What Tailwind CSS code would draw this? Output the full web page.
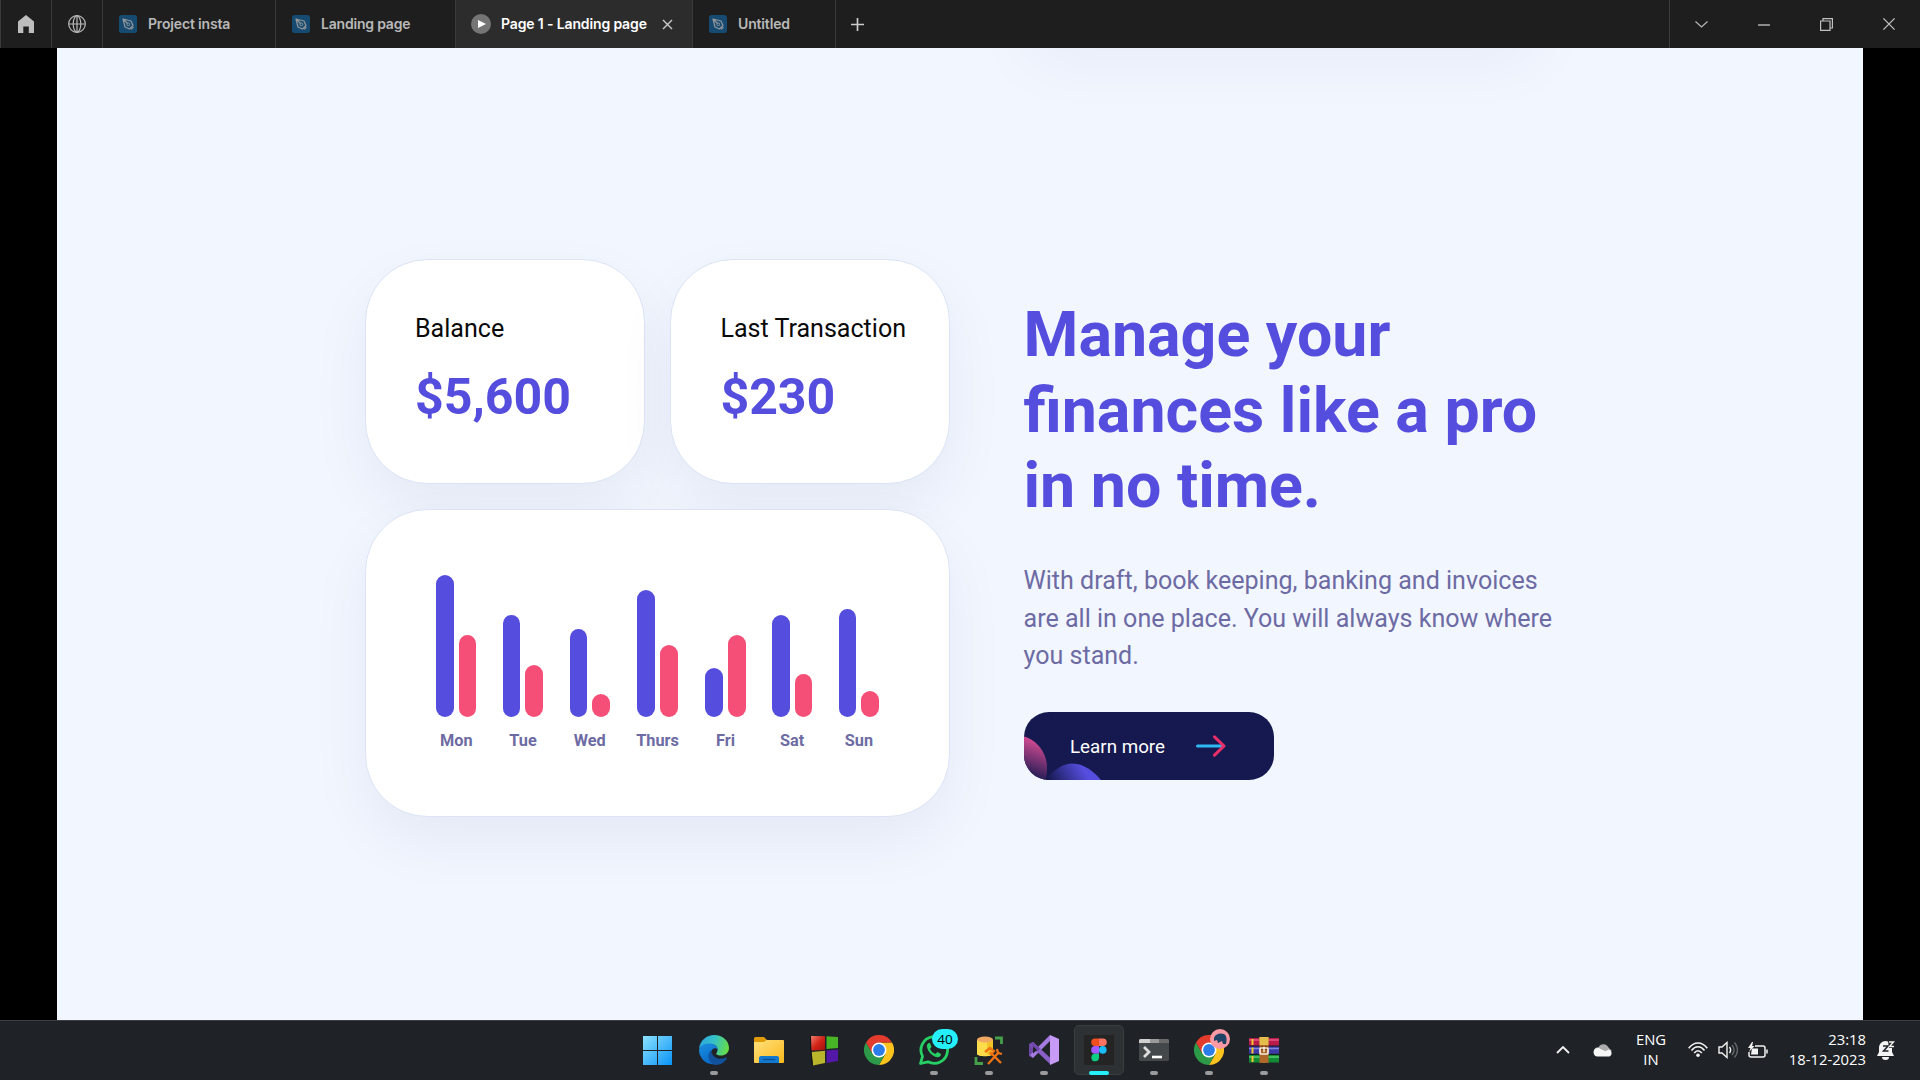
<!DOCTYPE html>
<html lang="en">
<head>
<meta charset="utf-8">
<title>Page 1 - Landing page</title>
<script src="https://cdn.jsdelivr.net/npm/@tailwindcss/browser@4"></script>
</head>
<body class="w-[1920px] h-[1080px] overflow-hidden bg-black flex flex-col font-['Roboto',sans-serif]">
<svg class="hidden">
  <symbol id="pen" viewBox="0 0 18 18">
    <rect width="18" height="18" rx="2.5" fill="#174a70"/>
    <path d="M4 4l8 2 2 4.5-3.5 3.5L6 12z M4 4l4.5 4.5 M12.2 14.4l2.2-2.2" fill="none" stroke="#93979b" stroke-width="1.2" stroke-linejoin="round"/>
    <circle cx="9.3" cy="9.3" r="1.4" fill="none" stroke="#93979b"/>
  </symbol>
  <symbol id="chrome" viewBox="0 0 30 30">
    <path d="M28 7.5A15 15 0 0 1 15 30L21.5 18.8 15 7.5z" fill="#fcc31e"/>
    <path d="M2 7.5A15 15 0 0 0 15 30L21.5 18.8 8.5 18.8z" fill="#2c9a48"/>
    <path d="M15 7.5H28A15 15 0 0 0 2 7.5L8.5 18.8z" fill="#e33b2e"/>
    <circle cx="15" cy="15" r="7.5" fill="#fff"/><circle cx="15" cy="15" r="5.9" fill="#2b7de9"/>
  </symbol>
</svg>

<header class="h-12 shrink-0 flex bg-[#1e1e1e] text-[#b9b9b9] font-['Inter',sans-serif] text-[14px] font-semibold border-l border-[#3a3a3a]">
  <div class="w-[51px] flex items-center justify-center border-r border-[#3a3a3a]">
    <svg width="16" height="18" viewBox="0 0 16 18"><path d="M8 0l8 6.5V18h-5.2v-6.500H5.300V18H0V6.500z" fill="#bdbdbd"/></svg>
  </div>
  <div class="w-[51px] flex items-center justify-center border-r border-[#3a3a3a]">
    <svg width="18" height="18" viewBox="0 0 18 18" fill="none" stroke="#b9b9b9" stroke-width="1.2"><circle cx="9" cy="9" r="8.300"/><ellipse cx="9" cy="9" rx="3.800" ry="8.300"/><path d="M.7 9h16.600M9 .7v16.600"/></svg>
  </div>
  <div class="w-[173px] flex items-center gap-[11px] pl-4 border-r border-[#3a3a3a]"><svg width="18" height="18"><use href="#pen"/></svg><span class="tracking-[-0.17px] pb-px">Project insta</span></div>
  <div class="w-[180px] flex items-center gap-[11px] pl-4 border-r border-[#3a3a3a]"><svg width="18" height="18"><use href="#pen"/></svg><span class="tracking-[-0.2px] pb-px">Landing page</span></div>
  <div class="w-[237px] flex items-center pl-[15px] border-r border-[#3a3a3a] bg-[#2c2c2c] text-white">
    <svg width="20" height="20"><circle cx="10" cy="10" r="10" fill="#757575"/><path d="M7 6l8 4-8 4z" fill="#fff"/></svg>
    <span class="ml-2.5 w-[161px] whitespace-nowrap tracking-[-0.14px] pb-px">Page 1 - Landing page</span>
    <svg width="11" height="11" stroke="#ccc" stroke-width="1.4"><path d="M1 1l9 9M10 1l-9 9"/></svg>
  </div>
  <div class="w-[143px] flex items-center gap-[11px] pl-4 border-r border-[#3a3a3a]"><svg width="18" height="18"><use href="#pen"/></svg><span class="tracking-[-0.15px] pb-px">Untitled</span></div>
  <div class="flex items-center pl-[15px] grow"><svg width="13" height="13" stroke="#ccc" stroke-width="1.700"><path d="M6.500 0v13M0 6.500h13"/></svg></div>
  <div class="w-[251px] flex items-center border-l border-[#3a3a3a] pl-[25px] gap-[50px]">
    <svg width="13" height="7" fill="none" stroke="#b9b9b9" stroke-width="1.100"><path d="M.5.5l6 5.500 6-5.500"/></svg>
    <svg width="12" height="13" stroke="#c8c8c8" stroke-width="1.300"><path d="M0 7h12"/></svg>
    <svg width="13" height="13" fill="none" stroke="#c0c0c0" stroke-width="1.200"><path d="M.6 3h9.400v9.400H.6zM3 3V.6h9.400V10H10"/></svg>
    <svg width="12" height="12" stroke="#c8c8c8" stroke-width="1.200"><path d="M.4.4l11.200 11.200M11.600.4L.4 11.600"/></svg>
  </div>
</header>

<main class="h-[972px] shrink-0 ml-[57px] w-[1806px] bg-[#f2f6ff] relative overflow-hidden flex">
  <div class="absolute left-[965px] -top-[60px] w-[520px] h-[44px] rounded-[60px] shadow-[0_25px_65px_rgba(22,25,79,0.06)]"></div>

  <section class="ml-[308px] mt-[210.700px] w-[585px] flex flex-col gap-[24.700px]">
    <div class="flex gap-[25px]">
      <div class="w-[280px] h-[225.500px] rounded-[62.500px] bg-white border border-[#dbe3f5] shadow-[0_25px_62px_rgba(22,25,79,0.055)] pl-[49px] pt-[54px]">
        <p class="text-[25.070px] leading-[29px] text-[#0a0a0a]">Balance</p>
        <p class="text-[50.100px] leading-[60px] mt-[24px] font-bold text-[#554ddd]">$5,600</p>
      </div>
      <div class="w-[280px] h-[225.500px] rounded-[62.500px] bg-white border border-[#dbe3f5] shadow-[0_25px_62px_rgba(22,25,79,0.055)] pl-[49.400px] pt-[54px]">
        <p class="text-[25.070px] leading-[29px] text-[#0a0a0a] whitespace-nowrap">Last Transaction</p>
        <p class="text-[50.100px] leading-[60px] mt-[24px] font-bold text-[#554ddd]">$230</p>
      </div>
    </div>
    <div id="chart" class="h-[308.500px] rounded-[62.500px] bg-white border border-[#dbe3f5] shadow-[0_25px_62px_rgba(22,25,79,0.055)] pl-[70.200px] pt-[64.800px] flex items-start gap-[26.500px]"></div>
  </section>

  <section class="ml-[73.500px] mt-[249.300px] w-[560px]">
    <h1 class="text-[62.700px] leading-[75.200px] font-bold text-[#554ddd]">Manage your<br>finances like a pro<br>in no time.</h1>
    <p class="mt-[39px] text-[25.070px] leading-[37.600px] text-[#6d6ba3] whitespace-nowrap">With draft, book keeping, banking and invoices<br>are all in one place. You will always know where<br>you stand.</p>
    <a class="mt-[37px] relative w-[250.700px] h-[68px] rounded-[25px] bg-[#16194f] overflow-hidden flex items-center pl-[46.500px] gap-[31px]">
      <svg class="absolute inset-0" width="251" height="68">
        <defs>
          <linearGradient id="pk" x1=".6" y1="0" x2=".4" y2="1"><stop offset="0" stop-color="#e8509a"/><stop offset="1" stop-color="#16194f"/></linearGradient>
          <linearGradient id="pu" gradientUnits="userSpaceOnUse" x1="58" y1="56" x2="28" y2="74"><stop offset="0" stop-color="#554ddd"/><stop offset="1" stop-color="#16194f"/></linearGradient>
        </defs>
        <path d="M0 24.500C11 27 24 40 23 57c0 4-.5 8-2 11H0z" fill="url(#pk)"/>
        <path d="M21 68C32 56 40 51.500 48 51.500S66 55 77 68z" fill="url(#pu)"/>
      </svg>
      <span class="relative top-px text-[18.800px] text-white whitespace-nowrap">Learn more</span>
      <svg class="relative" width="30" height="22" fill="none" stroke-width="3" stroke-linecap="round" stroke-linejoin="round"><path d="M1.500 11H26" stroke="#2fb8f3"/><path d="M18.500 1.800L28 11l-9.500 9.200" stroke="#ea2e68"/></svg>
    </a>
  </section>
</main>

<footer class="h-[60px] shrink-0 bg-[#1f2327] border-t border-[#3b3f43] flex pl-[632px] text-white font-['Open_Sans',sans-serif] relative">
  <nav class="flex gap-[5px] pt-1 h-[54px]">
    <div class="w-[50px] h-[50px] flex items-center justify-center mr-[2px]">
      <svg width="29" height="29"><defs><linearGradient id="w" x1="0" y1="0" x2="1" y2="1" gradientUnits="userSpaceOnUse" gradientTransform="scale(29)"><stop offset="0" stop-color="#8ce2ff"/><stop offset="1" stop-color="#0a93f5"/></linearGradient></defs><path d="M0 0h14v14H0zM15 0h14v14H15zM0 15h14v14H0zM15 15h14v14H15z" fill="url(#w)"/></svg>
    </div>
    <div class="w-[50px] h-[50px] relative flex items-center justify-center">
      <svg width="30" height="30" viewBox="0 0 30 30"><defs><linearGradient id="e1" x1="0" y1=".3" x2="1" y2=".5"><stop offset="0" stop-color="#2ba5e0"/><stop offset=".5" stop-color="#36c3c5"/><stop offset="1" stop-color="#66dd45"/></linearGradient><linearGradient id="e2" x1="0" y1="0" x2=".4" y2="1"><stop offset="0" stop-color="#1b8fe0"/><stop offset="1" stop-color="#0a6ac8"/></linearGradient></defs>
        <path d="M0 14C1 5 8 0 15 0c9 0 15 6 15 13 0 5-4 7.500-8 7.500-3.500 0-5.500-1.200-4.500-2.500 3-4 0-9-6-9C6 9 2 11 0 14z" fill="url(#e1)"/>
        <path d="M0 14.500C2 10 6 8 11 8.500c5 .3 8 4 8 6.500-2-3-6-2-7 2-1.500 6 3 10.500 9 10.500C18 30 7 31 2 22 0 19 0 16 0 14.500z" fill="url(#e2)"/>
        <path d="M12.300 15C8 18 8 28 16.500 30c5 0 9-2.500 11.500-6.700.3-.8-.3-1-.9-.7C20 26 12 22 12.300 15z" fill="#12529c"/></svg>
      <i class="absolute bottom-0 w-2 h-1 rounded-full bg-[#9a9b9d]"></i>
    </div>
    <div class="w-[50px] h-[50px] flex items-center justify-center">
      <svg width="30" height="28" viewBox="0 0 30 28"><defs><linearGradient id="f" x2="1" y2="1"><stop stop-color="#ffe07c"/><stop offset="1" stop-color="#fbb91d"/></linearGradient></defs><path d="M0 2.500A1.500 1.500 0 0 1 1.500 1H10l3 3v4H0z" fill="#e09c06"/><path d="M0 6h10l2.500-2H29a1 1 0 0 1 1 1v21a1 1 0 0 1-1 1H1a1 1 0 0 1-1-1z" fill="url(#f)"/><path d="M5 27v-5a2 2 0 0 1 2-2h16a2 2 0 0 1 2 2v5z" fill="#1379ce"/><path d="M9 23.500h12" stroke="#0a4f94" stroke-width="1.300"/></svg>
    </div>
    <div class="w-[50px] h-[50px] flex items-center justify-center">
      <svg width="28" height="31" viewBox="0 0 28 31"><defs><linearGradient id="q1" x2="1" y2="1"><stop stop-color="#f08070"/><stop offset=".5" stop-color="#d32418"/><stop offset="1" stop-color="#a3120b"/></linearGradient></defs><path d="M1 1l14 .300V15L1.500 15.500z" fill="url(#q1)"/><path d="M16.500 1.300L28 2v11l-11.500 1z" fill="#47b526"/><path d="M1.700 17L15 15.800V28L3 30.500z" fill="#b9b62c"/><path d="M16.500 15.500L28 14.500V26l-11.500 2z" fill="#5318a8"/><path d="M.5 1v14l2 15.500" stroke="#111" fill="none"/></svg>
    </div>
    <div class="w-[50px] h-[50px] flex items-center justify-center"><svg width="30" height="30"><use href="#chrome"/></svg></div>
    <div class="w-[50px] h-[50px] relative flex items-center justify-center">
      <svg width="30" height="30" viewBox="0 0 30 30"><path d="M1.500 28.500l2-7.200A13.300 13.300 0 1 1 9 26.800z" fill="none" stroke="#26d065" stroke-width="2.800" stroke-linejoin="round"/><path d="M10 8c-1.500.5-2.500 2-2 4 1 5 5 9 10 10.300 2 .3 4-1 4-3.300l-3.500-2-2 2c-3-1-4.500-2.700-5.500-5.200l1.500-1.800L11 8z" fill="#26d065"/></svg>
      <span class="absolute left-[23px] top-[4px] w-[26px] h-5 rounded-full bg-[#24effa] text-black text-[13.500px] leading-5 text-center">40</span>
      <i class="absolute bottom-0 w-2 h-1 rounded-full bg-[#9a9b9d]"></i>
    </div>
    <div class="w-[50px] h-[50px] relative flex items-center justify-center">
      <svg width="30" height="31" viewBox="0 0 30 31"><path d="M3 5v14c0 3 16 3 16 0V5z" fill="#fbdc4b"/><path d="M13 5h6v14l-6 1z" fill="#f2c226"/><ellipse cx="11" cy="4.500" rx="8" ry="3" fill="#f0a963"/><path d="M21 3h6.500v6M2 22v6.500h7" fill="none" stroke="#45a049" stroke-width="2.800"/><path d="M14 29l11-12M16 17l11 11" stroke="#ee7314" stroke-width="2.400"/><path d="M11 17l5-4 4 3-4 4M23 14l1 4 4 1" fill="none" stroke="#ee7314" stroke-width="2.300"/></svg>
      <i class="absolute bottom-0 w-2 h-1 rounded-full bg-[#9a9b9d]"></i>
    </div>
    <div class="w-[50px] h-[50px] relative flex items-center justify-center">
      <svg width="30" height="30" viewBox="0 0 30 30"><path d="M0 9l4-2v16l-4-2z" fill="#6d48a5"/><path d="M4 23L21 6V0L1 20z" fill="#a47be0"/><path d="M4 7l18 16.500V30L1 10z" fill="#8a60c8"/><path d="M1 8.500l3-1.500 7 6.400-3.500 3.600z" fill="#7048ac"/><path d="M21 0l9 4v22l-9 4z" fill="#c69af5"/><path d="M4 11.500v7l4-3.500zM21 9.500v11L14.500 15z" fill="#202428"/></svg>
      <i class="absolute bottom-0 w-2 h-1 rounded-full bg-[#9a9b9d]"></i>
    </div>
    <div class="w-[50px] h-[50px] relative flex items-center justify-center rounded-[5px] bg-[#2d3134] border border-[#393d40]">
      <svg width="30" height="30"><rect width="30" height="30" rx="1" fill="#242424"/><path d="M15 3.500h-4a3.800 3.800 0 0 0 0 7.600h4z" fill="#f24e1e"/><path d="M15 3.500h4a3.800 3.800 0 0 1 0 7.600h-4z" fill="#ff7262"/><path d="M15 11.100h-4a3.800 3.800 0 0 0 0 7.600h4z" fill="#a259ff"/><circle cx="18.800" cy="14.900" r="3.800" fill="#1abcfe"/><path d="M15 18.700h-4a3.800 3.800 0 1 0 4 3.800z" fill="#0acf83"/></svg>
      <i class="absolute -bottom-px w-5 h-1 rounded-full bg-[#24effa]"></i>
    </div>
    <div class="w-[50px] h-[50px] relative flex items-center justify-center">
      <svg width="30" height="22"><rect width="30" height="22" rx="1.500" fill="#45484a"/><path d="M0 4V1.500A1.500 1.500 0 0 1 1.500 0H11v4z" fill="#d0d0d0"/><path d="M11 0h9v4h-9z" fill="#9a9a9a"/><path d="M20 0h8.500A1.500 1.500 0 0 1 30 1.500V4H20z" fill="#6b6b6b"/><path d="M5 8l5 5-5 5" fill="none" stroke="#ddd" stroke-width="2.800"/><path d="M13 18h10" stroke="#fff" stroke-width="2.600"/></svg>
      <i class="absolute bottom-0 w-2 h-1 rounded-full bg-[#9a9b9d]"></i>
    </div>
    <div class="w-[50px] h-[50px] relative flex items-center justify-center">
      <svg width="30" height="30"><use href="#chrome"/></svg>
      <svg class="absolute left-[26px] top-[4px]" width="20" height="20"><circle cx="10" cy="10" r="10" fill="#f999a3"/><path d="M4 9c1-4 6-5.500 10-4 3 1.500 3 6 2 10h-3l-1-3-4 2-1-3-3 1z" fill="#1f4468"/></svg>
      <i class="absolute bottom-0 w-2 h-1 rounded-full bg-[#9a9b9d]"></i>
    </div>
    <div class="w-[50px] h-[50px] relative flex items-center justify-center">
      <svg width="30" height="26"><rect y="1" width="30" height="8" fill="#b81c4a"/><path d="M0 3h30" stroke="#e65480" stroke-width="1.500"/><rect y="9" width="30" height="8" fill="#3d3ba8"/><path d="M0 11.500h30" stroke="#8084e0" stroke-width="1.500"/><rect y="17.500" width="30" height="8" fill="#128a36"/><path d="M0 20h30" stroke="#54cf6c" stroke-width="1.500"/><path d="M0 9h30M0 17.300h30" stroke="#151515"/><path d="M3.500 2v6M3.500 10.500v6M3.500 19v6" stroke="#f3c52f" stroke-width="2"/><rect x="10.500" width="9" height="26" fill="#b0672a"/><rect x="10.500" width="9" height="8" fill="#e4bd4a"/><path d="M13 9v4M17 9v4" stroke="#6b3510" stroke-width="1.500"/><rect x="11" y="11" width="8" height="6" rx="1" fill="none" stroke="#f1ece0" stroke-width="1.700"/><path d="M15 10v5" stroke="#f1ece0" stroke-width="1.500"/></svg>
      <i class="absolute bottom-0 w-2 h-1 rounded-full bg-[#9a9b9d]"></i>
    </div>
  </nav>
  <div class="ml-[267px] h-[58px] flex items-center">
    <svg width="14" height="8" fill="none" stroke="#f2f2f2" stroke-width="1.800"><path d="M1 7l6-6 6 6"/></svg>
    <svg class="ml-[23px]" width="20" height="14"><path d="M1 8a4 4 0 0 1 4.500-3.800A5.500 5.500 0 0 1 15.500 4.500L19 8l-8 3z" fill="#a9abad"/><path d="M4.500 13.500a4.200 4.200 0 0 1-1-8.200c2-.5 3 0 4.500 1l4.500 2 3-1.800A3.700 3.700 0 0 1 16.500 13.500z" fill="#f6f6f6"/></svg>
    <p class="ml-[23px] w-[30px] text-center text-[14.800px] leading-5 relative -top-px">ENG<br>IN</p>
    <svg class="ml-[22px]" width="20" height="16" fill="none" stroke="#f2f2f2" stroke-width="1.600"><path d="M.7 6.200C6-.8 14-.8 19.300 6.200M3.500 8.500c4-5 9-5 13 0M6.200 11c2.500-3 5-3 7.600 0"/><circle cx="10" cy="13.200" r="1.800" fill="#f2f2f2" stroke="none"/></svg>
    <svg class="ml-[10px]" width="20" height="18" fill="none" stroke="#f2f2f2" stroke-width="1.400"><path d="M1 6h3l5-4.500v15L4 12H1z"/><path d="M11.500 6c1.500 2 1.500 4 0 6"/><path d="M14 4c2.500 3 2.500 7 0 10M16.500 1.500c4 5 4 10 0 15" stroke="#62666a"/></svg>
    <svg class="ml-[10px]" width="20" height="17" fill="none" stroke="#f2f2f2" stroke-width="1.500"><path d="M7 4h8a2 2 0 0 1 2 2v7a2 2 0 0 1-2 2H3a2 2 0 0 1-2-2v-3M19 7.500v4"/><path d="M4 6.500h6v6H3z" fill="#f2f2f2" stroke="none"/><path d="M4 0L0 6h2.500L1 10l5.500-6H4.200L5 0z" fill="#f2f2f2" stroke="none"/></svg>
    <p class="ml-[20px] w-[78px] text-right text-[14.800px] leading-5 whitespace-nowrap relative -top-px">23:18<br>18-12-2023</p>
    <svg class="ml-[11px]" width="18" height="20"><path d="M2 8c0-4 3-7 6.500-7S15 4 15 8v4l2 4H0l2-4z" fill="#f4f4f4"/><path d="M5 17h7a3.500 3 0 0 1-7 0z" fill="#f4f4f4"/><path d="M6 6h5l-4.500 5h5" stroke="#1f2327" stroke-width="1.500" fill="none"/><path d="M11 1h6.500v7H12z" fill="#1f2327"/><path d="M12 2h4.500L12.500 6.500H17" stroke="#f4f4f4" stroke-width="1.400" fill="none"/></svg>
  </div>
</footer>
<script>
const days = [['Mon',142,81.7],['Tue',101.7,51.7],['Wed',87.7,22.7],['Thurs',126.7,71.7],['Fri',49,81.7],['Sat',101.7,42.7],['Sun',108,25.3]];
document.getElementById('chart').innerHTML = days.map(([d,a,b]) => `
  <div class="flex flex-col items-center min-w-[40.200px]">
    <div class="flex items-end gap-[5px] h-[142px]">
      <i class="w-[17.600px] rounded-full bg-[#554ddd]" style="height:${a}px"></i>
      <i class="w-[17.600px] rounded-full bg-[#f54f78]" style="height:${b}px"></i>
    </div>
    <span class="mt-[14.500px] text-[16.300px] leading-[20px] font-bold text-[#6d6ba3]">${d}</span>
  </div>`).join('');
</script>
</body>
</html>
